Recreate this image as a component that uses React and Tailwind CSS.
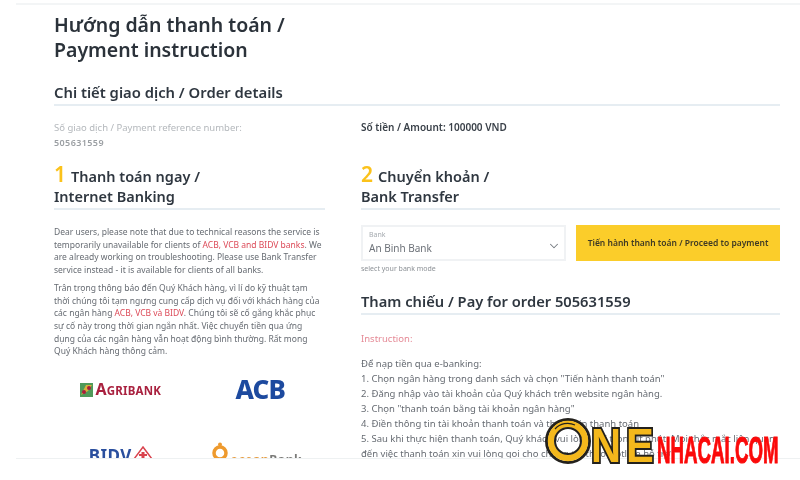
import React from 'react';
import { ChevronDown } from 'lucide-react';

function SectionTitle({ num, first, second }) {
  return (
    <div className="border-b-2 border-[#e6edf2] pb-[2px] text-[14.5px] leading-[20px] font-semibold text-[#2f3740]">
      <div>
        <span className="text-[21px] leading-[20px] font-semibold text-[#fbc21b] mr-[5px]">{num}</span>
        {first}
      </div>
      <div>{second}</div>
    </div>
  );
}

function AgribankLogo() {
  return (
    <div className="flex items-center gap-[2px]">
      <svg width="13" height="14" viewBox="0 0 13 14">
        <rect width="13" height="14" fill="#4f9a5a" />
        <path d="M1 12 L6 2 L12 2 L8 8 Z" fill="#d8b23c" />
        <circle cx="4" cy="9" r="2" fill="#a81e3c" />
        <circle cx="9" cy="5" r="2" fill="#a81e3c" />
      </svg>
      <span className="text-[11.5px] leading-[14px] font-bold text-[#a9213f] tracking-[0.2px]">
        <span className="text-[16px]">A</span>GRIBANK
      </span>
    </div>
  );
}

function BidvLogo() {
  return (
    <div className="flex items-start gap-[1px] h-[22px]">
      <span className="text-[17px] leading-[22px] font-bold text-[#2a4f9e] tracking-[0.5px]">BIDV</span>
      <svg width="20" height="14" viewBox="0 0 20 14" className="mt-[1px]">
        <path d="M10 1 L19 13 L1 13 Z" fill="none" stroke="#d9434e" strokeWidth="1.5" />
        <path d="M8.5 6 H11.5 V8 H14 V10 H11.5 V13 H8.5 V10 H6 V8 H8.5 Z" fill="#d9434e" />
      </svg>
    </div>
  );
}

function OceanLogo() {
  return (
    <div className="flex items-end gap-[2px] h-[24px]">
      <svg width="16" height="20" viewBox="0 0 16 20">
        <circle cx="8" cy="11" r="6" fill="none" stroke="#ee9a2e" strokeWidth="3.5" />
        <circle cx="8" cy="2.5" r="2" fill="#ee9a2e" />
      </svg>
      <span className="text-[12px] leading-[10px] font-bold text-[#e59a3c] translate-y-[3px] tracking-[0.6px]">
        ocean<span className="text-[#7a7a78]">Bank</span>
      </span>
    </div>
  );
}

function Watermark() {
  return (
    <div className="absolute left-[545px] top-[418px] flex items-end h-[46px] font-['Liberation_Sans',sans-serif]">
      <svg width="46" height="46" viewBox="0 0 46 46">
        <circle cx="23" cy="23" r="21.5" fill="none" stroke="#23211d" strokeWidth="3" />
        <circle cx="23" cy="23" r="17" fill="none" stroke="#f4b81c" strokeWidth="6.5" />
        <circle cx="23" cy="23" r="13" fill="none" stroke="#23211d" strokeWidth="2" />
        <path d="M10 11 A17 17 0 0 1 30 7" fill="none" stroke="#23211d" strokeWidth="1.2" />
      </svg>
      <span className="block w-[35px] text-[49px] leading-[38px] font-bold text-[#f4b81c] [-webkit-text-stroke:4px_#23211d] [paint-order:stroke_fill] scale-x-[0.85] origin-left">
        N
      </span>
      <span className="block w-[31px] text-[49px] leading-[38px] font-bold text-[#f4b81c] [-webkit-text-stroke:4px_#23211d] [paint-order:stroke_fill] scale-x-[0.85] origin-left">
        E
      </span>
      <span className="block w-[120px] text-[36px] leading-[27px] font-bold text-[#fb0a0a] [-webkit-text-stroke:1px_#fb0a0a] whitespace-nowrap scale-x-[0.52] origin-left">
        NHACAI.COM
      </span>
    </div>
  );
}

export default function App() {
  return (
    <div className="relative w-[800px] h-[480px] overflow-hidden bg-white font-['Noto_Sans','Open_Sans',sans-serif]">
      <div className="h-[458px] overflow-hidden blur-[0.5px]">
        <div className="ml-[16px] mt-[3px] h-[2px] bg-[#f3f5f6]" />
        <div className="pl-[54px] pr-[20px]">
          <h1 className="mt-[7px] text-[19.5px] leading-[25px] font-semibold text-[#2b323a]">
            Hướng dẫn thanh toán /<br />Payment instruction
          </h1>
          <h2 className="mt-[20px] border-b-2 border-[#e6edf2] pb-[2px] text-[14.8px] leading-[20px] font-semibold text-[#2f3740]">
            Chi tiết giao dịch / Order details
          </h2>

          <div className="mt-[14px] grid grid-cols-[271px_419px] gap-x-[36px]">
            <div>
              <div className="text-[9.5px] leading-[15px] text-[#b4b8bc]">Số giao dịch / Payment reference number:</div>
              <div className="text-[9px] leading-[15px] font-semibold text-[#9b9fa3] tracking-[0.4px]">505631559</div>

              <div className="mt-[14px]">
                <SectionTitle num="1" first="Thanh toán ngay /" second="Internet Banking" />
              </div>

              <div className="mt-[16px] text-[8.5px] leading-[12.7px] text-[#666b72]">
                <p>
                  Dear users, please note that due to technical reasons the service is temporarily unavailable for clients of{' '}
                  <span className="text-[#dc4a58]">ACB, VCB and BIDV banks</span>. We are already working on troubleshooting. Please use Bank Transfer service instead - it is available for clients of all banks.
                </p>
                <p className="mt-[5px]">
                  Trân trọng thông báo đến Quý Khách hàng, vì lí do kỹ thuật tạm thời chúng tôi tạm ngưng cung cấp dịch vụ đối với khách hàng của các ngân hàng{' '}
                  <span className="text-[#dc4a58]">ACB, VCB và BIDV</span>. Chúng tôi sẽ cố gắng khắc phục sự cố này trong thời gian ngắn nhất. Việc chuyển tiền qua ứng dụng của các ngân hàng vẫn hoạt động bình thường. Rất mong Quý Khách hàng thông cảm.
                </p>
              </div>

              <div className="mt-[15px] grid grid-cols-2 pr-[4px] justify-items-center">
                <div className="h-[34px] flex items-center">
                  <AgribankLogo />
                </div>
                <div className="h-[34px] flex items-center text-[26px] leading-[30px] font-extrabold text-[#1d4a9f] tracking-[-0.8px] pl-[12px] pb-[2px]">
                  ACB
                </div>
                <div className="mt-[38px]">
                  <BidvLogo />
                </div>
                <div className="mt-[31px] pl-[6px]">
                  <OceanLogo />
                </div>
              </div>
            </div>

            <div>
              <div className="text-[10px] leading-[15px] font-semibold text-[#3a4149]">Số tiền / Amount: 100000 VND</div>

              <div className="mt-[29px]">
                <SectionTitle num="2" first="Chuyển khoản /" second="Bank Transfer" />
              </div>

              <div className="mt-[15px] flex gap-[10px]">
                <div className="relative w-[205px] h-[36px] border-2 border-[#f0f2f4] pl-[6px] pt-[3px]">
                  <div className="text-[7px] leading-[10px] text-[#a6abb0]">Bank</div>
                  <div className="text-[10px] leading-[14px] text-[#6c7178] mt-[1px]">An Binh Bank</div>
                  <ChevronDown className="absolute right-[3px] top-[12px] text-[#777c82]" size={14} strokeWidth={1.8} />
                </div>
                <div className="w-[204px] h-[36px] flex items-center justify-center bg-[#fbcd2a] text-[8.5px] font-semibold text-[#3f3a24] whitespace-nowrap">
                  Tiến hành thanh toán / Proceed to payment
                </div>
              </div>
              <div className="mt-[2px] text-[7px] leading-[12px] text-[#8c9196]">select your bank mode</div>

              <div className="mt-[15px] border-b-2 border-[#e6edf2] pb-[1px] text-[14.7px] leading-[22px] font-semibold text-[#2f3740]">
                Tham chiếu / Pay for order 505631559
              </div>

              <div className="mt-[16px] text-[9.5px] leading-[15px] text-[#e58a96]">Instruction:</div>
              <div className="mt-[10px] text-[9.5px] leading-[15px] text-[#666b72] whitespace-nowrap">
                <div>Để nạp tiền qua e-banking:</div>
                <div>1. Chọn ngân hàng trong danh sách và chọn "Tiến hành thanh toán"</div>
                <div>2. Đăng nhập vào tài khoản của Quý khách trên website ngân hàng.</div>
                <div>3. Chọn "thanh toán bằng tài khoản ngân hàng"</div>
                <div>4. Điền thông tin tài khoản thanh toán và thông tin thanh toán</div>
                <div>5. Sau khi thực hiện thanh toán, Quý khách vui lòng đợi trong ít phút. Mọi thắc mắc liên quan</div>
                <div>đến việc thanh toán xin vui lòng gọi cho chúng tôi theo Hotline hỗ trợ</div>
              </div>
            </div>
          </div>
        </div>
      </div>
      <div className="ml-[16px] h-[22px] border-t border-[#eef1f2] bg-white" />
      <Watermark />
    </div>
  );
}
